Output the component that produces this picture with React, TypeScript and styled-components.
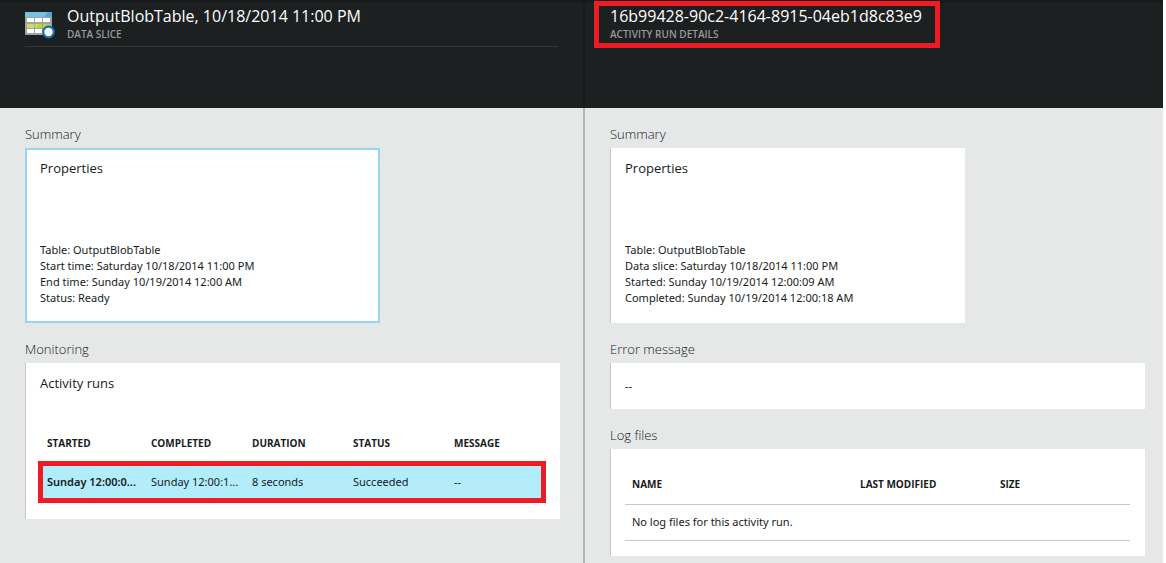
import React from "react";
import styled, { createGlobalStyle } from "styled-components";

const GlobalStyle = createGlobalStyle`
  * { box-sizing: border-box; }
  body {
    margin: 0;
    background: #fff;
    color: #161b1d;
    font-family: "Open Sans", "Noto Sans", sans-serif;
    font-size: 11px;
    line-height: 16px;
  }
  h1, h2, h3, p { margin: 0; font-weight: 400; }
`;

const Journey = styled.main`
  display: grid;
  grid-template-columns: 585fr 578fr;
  min-height: 100vh;
  margin-right: 3px;
`;

const Blade = styled.article<{ $divided?: boolean }>`
  --divider: ${(p) => (p.$divided ? "2px" : "0px")};
  display: flex;
  flex-direction: column;
  min-width: 0;
`;

const BladeHeader = styled.header`
  height: 108px;
  padding: 1px 25px 0;
  background: #1c2021;
  border-top: 3px solid #17191b;
  border-right: var(--divider) solid #17191b;
`;

const HeaderBar = styled.div`
  display: flex;
  gap: 12px;
  height: 43px;
  border-bottom: 1px solid #323637;
`;

const HeaderIcon = styled.svg`
  flex: none;
  width: 30px;
  height: 27px;
  margin-top: 8px;
`;

const TitleBlock = styled.div<{ $marked?: boolean }>`
  width: max-content;
  ${(p) =>
    p.$marked &&
    `
    margin: -3px 0 0 -16px;
    padding: 3px 18px 4px 16px;
    height: 47px;
    outline: 5px solid #ed1c24;
    outline-offset: -5px;
  `}
`;

const Title = styled.h1`
  color: #fff;
  font-size: 16px;
  line-height: 24px;
  white-space: nowrap;
`;

const Subtitle = styled.p`
  color: #96999a;
  font-size: 10px;
  font-weight: 600;
  line-height: 12px;
  text-transform: uppercase;
`;

const BladeBody = styled.div<{ $end: number }>`
  flex: 1;
  display: flex;
  flex-direction: column;
  gap: 16px;
  padding: 16px ${(p) => p.$end}px 7px 25px;
  background: #e5e8e7;
  border-right: var(--divider) solid #b4b7b6;
`;

const Lens = styled.section`
  display: flex;
  flex-direction: column;
  gap: 4px;
`;

const LensTitle = styled.h2`
  color: #161b1d;
  font-size: 13px;
  font-weight: 300;
  line-height: 20px;
`;

const Part = styled.div`
  padding: 10px 14px 16px;
  background: #fff;
  border-left: 1px solid #c6c9c9;
`;

const PropertiesPart = styled(Part)<{ $selected?: boolean }>`
  display: flex;
  flex-direction: column;
  justify-content: space-between;
  width: 355px;
  max-width: 100%;
  min-height: 175px;
  padding-bottom: 17px;
  ${(p) =>
    p.$selected &&
    `
    padding: 8px 13px 15px;
    border: 2px solid #9ad4f4;
  `}
`;

const Details = styled.div`
  font-family: "Noto Sans", sans-serif;
`;

const MessagePart = styled(Part)`
  padding: 15px 14px;
  font-family: "Noto Sans", sans-serif;
`;

const LogPart = styled(Part)`
  padding: 15px 15px 15px 14px;
`;

const PartTitle = styled.h3`
  font-size: 13px;
  line-height: 20px;
`;

const Table = styled.table`
  width: 100%;
  border-collapse: collapse;
  table-layout: fixed;
`;

const HeadCell = styled.th`
  padding: 0 0 0 7px;
  font-size: 10px;
  font-weight: 700;
  text-align: left;
  text-transform: uppercase;
  white-space: nowrap;
`;

const Cell = styled.td`
  padding: 0 0 0 7px;
  font-family: "Noto Sans", sans-serif;
  white-space: nowrap;
`;

const RunsTable = styled(Table)`
  width: calc(100% + 2px);
  margin: 32px 0 0 -2px;
  ${HeadCell} { height: 36px; }
  ${HeadCell}, ${Cell} { padding-left: 9px; }
`;

const MarkedRow = styled.tr`
  height: 42px;
  background: #b3ecfb;
  outline: 5px solid #ed1c24;
  outline-offset: -5px;
  ${Cell}:first-child { font-weight: 600; }
`;

const LogTable = styled(Table)`
  ${HeadCell} { height: 40px; }
  ${Cell} { height: 36px; }
  tr { border-bottom: 1px solid #c6c9c9; }
`;

const Column = styled.col<{ $width?: number }>`
  width: ${(p) => (p.$width ? `${p.$width}px` : "auto")};
`;

function SliceIcon() {
  return (
    <HeaderIcon viewBox="0 0 30 27" aria-hidden="true">
      <rect width="27" height="23" rx="1" fill="#a0a2a4" />
      <path d="M0 5V1a1 1 0 0 1 1-1h25a1 1 0 0 1 1 1v4z" fill="#4aaad0" />
      <path d="M0 5V1a1 1 0 0 1 1-1h22l-4 5z" fill="#76c3df" />
      <path d="M2 6h7v4H2zM10 6h7v4h-7zM18 6h7v4h-7zM2 17h7v4H2zM10 17h7v4h-7z" fill="#fff" />
      <path d="M2 12h7v4H2zM10 12h7v4h-7zM18 12h7v4h-7z" fill="#b8d432" />
      <path d="M2 12h7v4H2zM10 12h4l-3 4h-1z" fill="#cade66" />
      <circle cx="23.500" cy="20" r="5.300" fill="#fff" stroke="#0f72c0" strokeWidth="2.200" />
    </HeaderIcon>
  );
}

const runs = [["Sunday 12:00:0...", "Sunday 12:00:1...", "8 seconds", "Succeeded", "--"]];

export default function App() {
  return (
    <>
      <GlobalStyle />
      <Journey>
        <Blade $divided>
          <BladeHeader>
            <HeaderBar>
              <SliceIcon />
              <TitleBlock>
                <Title>OutputBlobTable, 10/18/2014 11:00 PM</Title>
                <Subtitle>Data slice</Subtitle>
              </TitleBlock>
            </HeaderBar>
          </BladeHeader>
          <BladeBody $end={23}>
            <Lens>
              <LensTitle>Summary</LensTitle>
              <PropertiesPart $selected>
                <PartTitle>Properties</PartTitle>
                <Details>
                  <p>Table: OutputBlobTable</p>
                  <p>Start time: Saturday 10/18/2014 11:00 PM</p>
                  <p>End time: Sunday 10/19/2014 12:00 AM</p>
                  <p>Status: Ready</p>
                </Details>
              </PropertiesPart>
            </Lens>
            <Lens>
              <LensTitle>Monitoring</LensTitle>
              <Part>
                <PartTitle>Activity runs</PartTitle>
                <RunsTable>
                  <colgroup>
                    <Column $width={104} />
                    <Column $width={101} />
                    <Column $width={101} />
                    <Column $width={101} />
                    <Column />
                  </colgroup>
                  <thead>
                    <tr>
                      <HeadCell scope="col">Started</HeadCell>
                      <HeadCell scope="col">Completed</HeadCell>
                      <HeadCell scope="col">Duration</HeadCell>
                      <HeadCell scope="col">Status</HeadCell>
                      <HeadCell scope="col">Message</HeadCell>
                    </tr>
                  </thead>
                  <tbody>
                    {runs.map((run) => (
                      <MarkedRow key={run[0]}>
                        {run.map((value, i) => (
                          <Cell key={i}>{value}</Cell>
                        ))}
                      </MarkedRow>
                    ))}
                  </tbody>
                </RunsTable>
              </Part>
            </Lens>
          </BladeBody>
        </Blade>

        <Blade>
          <BladeHeader>
            <TitleBlock $marked>
              <Title>16b99428-90c2-4164-8915-04eb1d8c83e9</Title>
              <Subtitle>Activity run details</Subtitle>
            </TitleBlock>
          </BladeHeader>
          <BladeBody $end={18}>
            <Lens>
              <LensTitle>Summary</LensTitle>
              <PropertiesPart>
                <PartTitle>Properties</PartTitle>
                <Details>
                  <p>Table: OutputBlobTable</p>
                  <p>Data slice: Saturday 10/18/2014 11:00 PM</p>
                  <p>Started: Sunday 10/19/2014 12:00:09 AM</p>
                  <p>Completed: Sunday 10/19/2014 12:00:18 AM</p>
                </Details>
              </PropertiesPart>
            </Lens>
            <Lens>
              <LensTitle>Error message</LensTitle>
              <MessagePart>
                <p>--</p>
              </MessagePart>
            </Lens>
            <Lens>
              <LensTitle>Log files</LensTitle>
              <LogPart>
                <LogTable>
                  <colgroup>
                    <Column $width={228} />
                    <Column $width={140} />
                    <Column />
                  </colgroup>
                  <thead>
                    <tr>
                      <HeadCell scope="col">Name</HeadCell>
                      <HeadCell scope="col">Last modified</HeadCell>
                      <HeadCell scope="col">Size</HeadCell>
                    </tr>
                  </thead>
                  <tbody>
                    <tr>
                      <Cell colSpan={3}>No log files for this activity run.</Cell>
                    </tr>
                  </tbody>
                </LogTable>
              </LogPart>
            </Lens>
          </BladeBody>
        </Blade>
      </Journey>
    </>
  );
}
